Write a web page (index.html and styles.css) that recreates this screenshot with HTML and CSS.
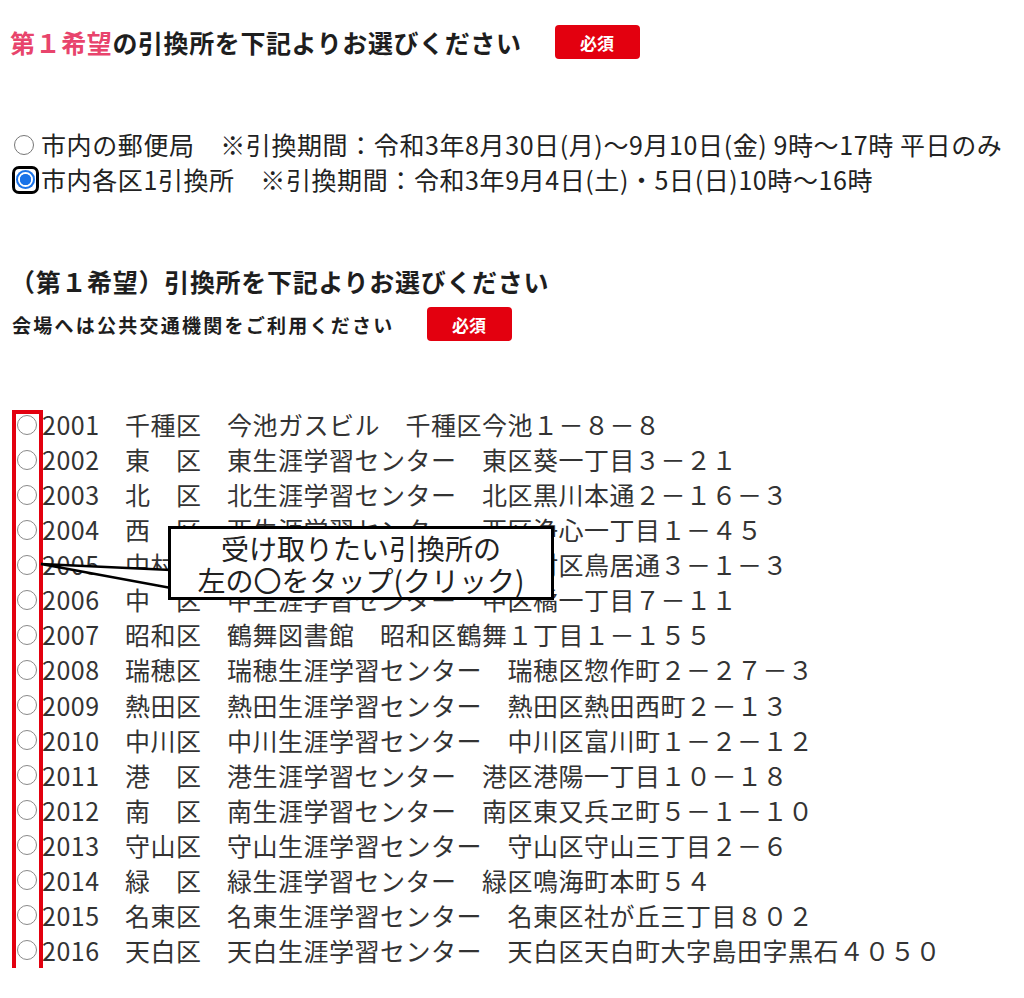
FILE: index.html
```html
<!DOCTYPE html>
<html lang="ja">
<head>
<meta charset="utf-8">
<link rel="stylesheet" href="styles.css">
</head>
<body>
<div class="page">
  <div class="head-row">
    <h1 class="head"><span class="pink">第１希望</span>の引換所を下記よりお選びください</h1>
    <span class="badge">必須</span>
  </div>

  <div class="options">
    <div class="opt"><span class="radio"></span><span class="opt-text">市内の郵便局　※引換期間：令和3年8月30日(月)～9月10日(金) 9時～17時 平日のみ</span></div>
    <div class="opt"><span class="radio-sel"><span class="dot"></span></span><span class="opt-text">市内各区1引換所　※引換期間：令和3年9月4日(土)・5日(日)10時～16時</span></div>
  </div>

  <h2 class="head2">（第１希望）引換所を下記よりお選びください</h2>
  <div class="sub-row">
    <span class="sub">会場へは公共交通機関をご利用ください</span>
    <span class="badge">必須</span>
  </div>

  <div class="list">
    <div class="row"><span class="c"></span><span class="t">2001　千種区　今池ガスビル　千種区今池１－８－８</span></div>
    <div class="row"><span class="c"></span><span class="t">2002　東　区　東生涯学習センター　東区葵一丁目３－２１</span></div>
    <div class="row"><span class="c"></span><span class="t">2003　北　区　北生涯学習センター　北区黒川本通２－１６－３</span></div>
    <div class="row"><span class="c"></span><span class="t">2004　西　区　西生涯学習センター　西区浄心一丁目１－４５</span></div>
    <div class="row"><span class="c"></span><span class="t">2005　中村区　中村生涯学習センター　中村区鳥居通３－１－３</span></div>
    <div class="row"><span class="c"></span><span class="t">2006　中　区　中生涯学習センター　中区橘一丁目７－１１</span></div>
    <div class="row"><span class="c"></span><span class="t">2007　昭和区　鶴舞図書館　昭和区鶴舞１丁目１－１５５</span></div>
    <div class="row"><span class="c"></span><span class="t">2008　瑞穂区　瑞穂生涯学習センター　瑞穂区惣作町２－２７－３</span></div>
    <div class="row"><span class="c"></span><span class="t">2009　熱田区　熱田生涯学習センター　熱田区熱田西町２－１３</span></div>
    <div class="row"><span class="c"></span><span class="t">2010　中川区　中川生涯学習センター　中川区富川町１－２－１２</span></div>
    <div class="row"><span class="c"></span><span class="t">2011　港　区　港生涯学習センター　港区港陽一丁目１０－１８</span></div>
    <div class="row"><span class="c"></span><span class="t">2012　南　区　南生涯学習センター　南区東又兵ヱ町５－１－１０</span></div>
    <div class="row"><span class="c"></span><span class="t">2013　守山区　守山生涯学習センター　守山区守山三丁目２－６</span></div>
    <div class="row"><span class="c"></span><span class="t">2014　緑　区　緑生涯学習センター　緑区鳴海町本町５４</span></div>
    <div class="row"><span class="c"></span><span class="t">2015　名東区　名東生涯学習センター　名東区社が丘三丁目８０２</span></div>
    <div class="row"><span class="c"></span><span class="t">2016　天白区　天白生涯学習センター　天白区天白町大字島田字黒石４０５０</span></div>

    <div class="red-frame"></div>

    <svg class="pointer" width="140" height="40" viewBox="0 0 140 40">
      <polygon points="133,11 3,5 133,29" fill="#fff" stroke="#000" stroke-width="2.5" stroke-linejoin="miter"/>
    </svg>
    <div class="callout">受け取りたい引換所の<br>左の〇をタップ(クリック)</div>
  </div>
</div>
</body>
</html>
```
FILE: styles.css
```css
* { box-sizing: border-box; }
html, body { margin: 0; padding: 0; background: #fff; }
body {
  font-family: "Noto Sans CJK JP", "Noto Sans", sans-serif;
  color: #222;
}
.page { padding: 22px 0 0 0; width: 1024px; }

.head-row {
  display: flex;
  align-items: center;
  height: 40px;
  padding-left: 10px;
}
.head {
  margin: 0;
  font-size: 25px;
  font-weight: 700;
  line-height: 40px;
  letter-spacing: 0.6px;
  color: #1e1e1e;
}
.pink { color: #e8446c; }
.badge {
  display: inline-flex;
  align-items: center;
  justify-content: center;
  width: 85px;
  height: 34px;
  background: #e3000f;
  color: #fff;
  border-radius: 4px;
  font-size: 17px;
  font-weight: 700;
}
.head-row .badge { margin-left: 33px; }

.options { margin-top: 65px; padding-left: 12px; }
.opt {
  display: flex;
  align-items: center;
  height: 35px;
  font-size: 25px;
  line-height: 35px;
  letter-spacing: 0.6px;
  color: #222;
  white-space: nowrap;
}
.radio {
  width: 20px; height: 20px;
  border: 1.5px solid #777;
  border-radius: 50%;
  margin: 0 7px 0 2px;
  flex: none;
}
.radio-sel {
  width: 27px; height: 28px;
  border: 3px solid #000;
  border-radius: 7px;
  display: flex;
  align-items: center;
  justify-content: center;
  margin-right: 2px;
  flex: none;
}
.radio-sel .dot {
  width: 19px; height: 19px;
  border-radius: 50%;
  background: #1a73e8;
  box-shadow: inset 0 0 0 2px #1a73e8, inset 0 0 0 4px #fff;
  position: relative;
}
.radio-sel .dot::after {
  content: "";
  position: absolute;
  left: 4px; top: 4px;
  width: 11px; height: 11px;
  border-radius: 50%;
  background: #1a73e8;
}

.head2 {
  margin: 66px 0 0 0;
  padding-left: 10px;
  font-size: 25px;
  font-weight: 700;
  line-height: 36px;
  letter-spacing: 0.7px;
  color: #1e1e1e;
}
.sub-row {
  display: flex;
  align-items: center;
  height: 34px;
  margin-top: 8px;
  padding-left: 12px;
}
.sub {
  font-size: 19px;
  font-weight: 700;
  letter-spacing: 2.25px;
  color: #1e1e1e;
}
.sub-row .badge { margin-left: 32px; }

.list {
  position: relative;
  margin-top: 66px;
  padding-left: 17px;
}
.row {
  display: flex;
  align-items: center;
  height: 35.07px;
  font-size: 25px;
  color: #333;
  white-space: nowrap;
}
.c {
  width: 20px; height: 20px;
  border: 1.5px solid #8a8a8a;
  border-radius: 50%;
  flex: none;
  margin-right: 5px;
}
.t { line-height: 35px; letter-spacing: 0.5px; }

.red-frame {
  position: absolute;
  left: 12px;
  top: 3px;
  width: 31px;
  height: 563px;
  border: 4px solid #e3000f;
}
.pointer {
  position: absolute;
  left: 38px;
  top: 152px;
}
.callout {
  position: absolute;
  left: 168px;
  top: 119px;
  width: 386px;
  height: 74px;
  border: 3px solid #000;
  background: #fff;
  text-align: center;
  font-size: 28px;
  line-height: 32px;
  padding-top: 3px;
  color: #222;
}
```
